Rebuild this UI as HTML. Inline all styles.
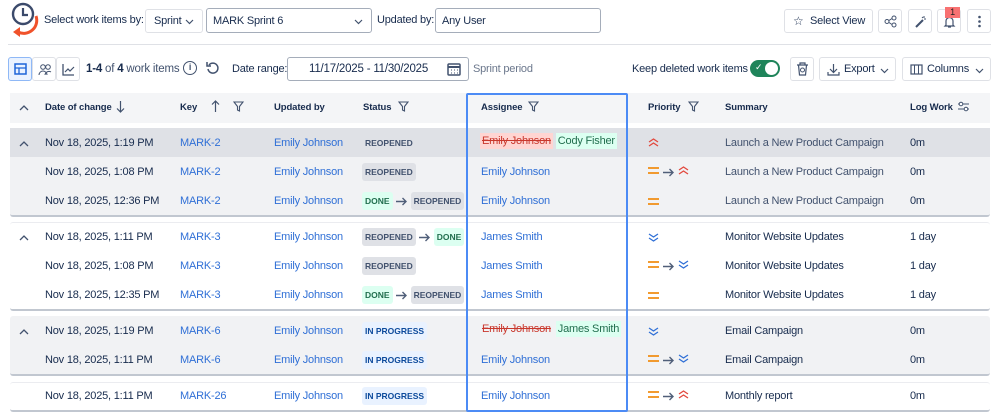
<!DOCTYPE html>
<html><head><meta charset="utf-8"><style>
*{box-sizing:border-box;margin:0;padding:0}
body{width:999px;height:418px;background:#fff;font-family:"Liberation Sans",Arial,sans-serif;color:#172b4d;position:relative;overflow:hidden;font-size:11px;letter-spacing:-0.2px}
.a{position:absolute;white-space:nowrap}
.btn{position:absolute;border:1px solid #dfe1e6;border-radius:3px;background:#fff}
.sel{position:absolute;border:1px solid #a5adba;border-radius:3px;background:#fff}
.grp{position:absolute;left:10px;width:980px;border-bottom:2px solid #c1c7d0;border-radius:3px}
.th{font-weight:bold;font-size:9.5px;color:#172b4d;letter-spacing:-0.1px}
.lk{color:#2f6fd6}
.tag{display:inline-block;font-size:8.5px;font-weight:bold;padding:4px 3px;border-radius:3px;background:#dfe1e6;color:#42526e;vertical-align:middle;letter-spacing:0}
.done{background:#dcfff1;color:#216e4e}
.prog{background:#e9f2ff;color:#0c4a9c}
.arr{vertical-align:middle;margin:0 3px}
svg{display:inline-block}
</style></head><body>
<svg class="a" style="left:8px;top:2px" width="34" height="36" viewBox="0 0 34 36">
<circle cx="15" cy="12" r="10" fill="none" stroke="#3b4a6b" stroke-width="2.4"/>
<path d="M15 6v7h5" fill="none" stroke="#3b4a6b" stroke-width="2.2"/>
<path d="M28 14 A13 13 0 0 1 10 30" fill="none" stroke="#f0522b" stroke-width="3"/>
<path d="M5 30 L12 25 L12 35 Z" fill="#f0522b"/>
</svg>
<div class="a" style="left:44px;top:14px">Select work items by:</div>
<div class="btn" style="left:145px;top:9px;width:58px;height:24px"><span class="a" style="left:8px;top:5px">Sprint</span><svg class="a" style="left:39px;top:9px" width="9" height="6"><path d="M1 1l3.5 3.5L8 1" fill="none" stroke="#42526e" stroke-width="1.2"/></svg></div>
<div class="sel" style="left:206px;top:8px;width:166px;height:25px"><span class="a" style="left:6px;top:6px">MARK Sprint 6</span><svg class="a" style="left:147px;top:10px" width="9" height="6"><path d="M1 1l3.5 3.5L8 1" fill="none" stroke="#42526e" stroke-width="1.2"/></svg></div>
<div class="a" style="left:377px;top:14px">Updated by:</div>
<div class="sel" style="left:435px;top:8px;width:166px;height:25px"><span class="a" style="left:6px;top:6px">Any User</span></div>
<div class="btn" style="left:784px;top:9px;width:89px;height:24px"><span class="a" style="left:8px;top:4px;font-size:12px">☆</span><span class="a" style="left:25px;top:5px">Select View</span></div>
<div class="btn" style="left:878px;top:9px;width:24px;height:24px"><svg class="a" style="left:5px;top:5px" width="13" height="13"><circle cx="10" cy="3" r="2" fill="none" stroke="#42526e"/><circle cx="3" cy="6.5" r="2" fill="none" stroke="#42526e"/><circle cx="10" cy="10" r="2" fill="none" stroke="#42526e"/><path d="M5 5.5l3-2M5 7.5l3 2" stroke="#42526e"/></svg></div>
<div class="btn" style="left:908px;top:9px;width:24px;height:24px"><svg class="a" style="left:5px;top:5px" width="13" height="13"><path d="M2 12L9 5" stroke="#42526e" stroke-width="2"/><path d="M10 1v2M12 4h-2M8 2l1 1" stroke="#42526e"/></svg></div>
<div class="btn" style="left:937px;top:9px;width:24px;height:24px"><svg class="a" style="left:5px;top:6px" width="13" height="13"><path d="M3 9V5a3.5 3.5 0 0 1 7 0v4l1 1H2z M5 11h3" fill="none" stroke="#42526e" stroke-width="1.2"/></svg></div>
<div class="a" style="left:945px;top:7px;width:15px;height:11px;background:#f87171;color:#222;font-size:9px;text-align:center;line-height:11px">1</div>
<div class="btn" style="left:967px;top:9px;width:24px;height:24px"><svg class="a" style="left:10px;top:5px" width="3" height="13"><circle cx="1.5" cy="2" r="1.3" fill="#42526e"/><circle cx="1.5" cy="6.5" r="1.3" fill="#42526e"/><circle cx="1.5" cy="11" r="1.3" fill="#42526e"/></svg></div>
<div class="a" style="left:8px;top:44px;width:983px;height:1px;background:#dfe1e6"></div>

<div class="a" style="left:8px;top:57px;width:24px;height:24px;border:1px solid #8fb8f6;background:#e9f2ff;border-radius:3px"></div>
<svg class="a" style="left:14px;top:63px" width="13" height="12"><rect x="1" y="1" width="11" height="10" fill="none" stroke="#1d64d8" stroke-width="1.5"/><path d="M1 5h11M5 5v6" stroke="#1d64d8" stroke-width="1.3"/></svg>
<div class="btn" style="left:32px;top:57px;width:24px;height:24px"><svg class="a" style="left:5px;top:5px" width="14" height="13"><circle cx="5" cy="4" r="2.3" fill="none" stroke="#42526e"/><circle cx="10" cy="4" r="2.3" fill="none" stroke="#42526e"/><path d="M1 12a4 4 0 0 1 8 0M7 12a4 4 0 0 1 6 -3" fill="none" stroke="#42526e"/></svg></div>
<div class="btn" style="left:56px;top:57px;width:24px;height:24px"><svg class="a" style="left:5px;top:5px" width="13" height="13"><path d="M1 1v11h11" fill="none" stroke="#42526e" stroke-width="1.3"/><path d="M3 9l3-3 2 2 4-4" fill="none" stroke="#42526e" stroke-width="1.2"/></svg></div>
<div class="a" style="left:86px;top:63px;color:#42526e;font-size:11.5px"><b style="color:#172b4d">1-4</b> of <b style="color:#172b4d">4</b> work items</div>
<div class="a" style="left:183px;top:61px;width:14px;height:14px;border:1.5px solid #42526e;border-radius:50%;font-size:9px;text-align:center;line-height:11px;font-weight:bold;color:#42526e">i</div>
<svg class="a" style="left:206px;top:61px" width="14" height="14"><path d="M3 4a5 5 0 1 1 -1 4" fill="none" stroke="#42526e" stroke-width="1.5"/><path d="M1 1v4h4" fill="none" stroke="#42526e" stroke-width="1.5"/></svg>
<div class="a" style="left:232px;top:63px">Date range:</div>
<div class="sel" style="left:287px;top:57px;width:182px;height:24px"><span class="a" style="left:21px;top:5px;font-size:11.5px">11/17/2025 - 11/30/2025</span>
<svg class="a" style="left:159px;top:4px" width="14" height="14"><rect x="1" y="2" width="12" height="11" rx="1" fill="none" stroke="#42526e" stroke-width="1.5"/><path d="M1 5h12" stroke="#42526e" stroke-width="2"/><path d="M4 8h1M7 8h1M10 8h1M4 11h1M7 11h1M10 11h1" stroke="#42526e"/></svg></div>
<div class="a" style="left:473px;top:63px;color:#6b778c">Sprint period</div>
<div class="a" style="left:632px;top:63px">Keep deleted work items</div>
<div class="a" style="left:750px;top:60px;width:30px;height:17px;border-radius:9px;background:#1f845a"><span class="a" style="left:5px;top:2px;color:#fff;font-size:9px">✓</span><span class="a" style="left:15px;top:2px;width:13px;height:13px;border-radius:50%;background:#fff"></span></div>
<div class="btn" style="left:790px;top:57px;width:24px;height:24px"><svg class="a" style="left:5px;top:4px" width="13" height="14"><path d="M1 3h11M4 3V1h5v2M2.5 3l1 10h6l1-10" fill="none" stroke="#42526e" stroke-width="1.2"/><circle cx="6.5" cy="8" r="2" fill="none" stroke="#42526e"/></svg></div>
<div class="btn" style="left:819px;top:57px;width:77px;height:24px"><svg class="a" style="left:7px;top:5px" width="13" height="13"><path d="M6.5 1v8M3 6l3.5 3.5L10 6M1 9v3h11V9" fill="none" stroke="#42526e" stroke-width="1.2"/></svg><span class="a" style="left:24px;top:5px">Export</span><svg class="a" style="left:60px;top:10px" width="9" height="6"><path d="M1 1l3.5 3.5L8 1" fill="none" stroke="#42526e" stroke-width="1.2"/></svg></div>
<div class="btn" style="left:902px;top:57px;width:89px;height:24px"><svg class="a" style="left:7px;top:6px" width="13" height="11"><rect x="1" y="1" width="11" height="9" fill="none" stroke="#42526e" stroke-width="1.2"/><path d="M4.5 1v9M8.5 1v9" stroke="#42526e"/></svg><span class="a" style="left:24px;top:5px">Columns</span><svg class="a" style="left:72px;top:10px" width="9" height="6"><path d="M1 1l3.5 3.5L8 1" fill="none" stroke="#42526e" stroke-width="1.2"/></svg></div>

<div class="a" style="left:10px;top:93px;width:980px;height:30px;background:#f4f5f7"></div>
<svg class="a" style="left:19px;top:104px" width="10" height="7"><path d="M1 6l4-4 4 4" fill="none" stroke="#42526e" stroke-width="1.3"/></svg>
<div class="a th" style="left:45px;top:102px">Date of change</div>
<svg class="a" style="left:116px;top:100px" width="9" height="13"><path d="M4.5 1v11M1 8.5l3.5 3.5L8 8.5" fill="none" stroke="#42526e" stroke-width="1.2"/></svg>
<div class="a th" style="left:180px;top:102px">Key</div>
<svg class="a" style="left:211px;top:100px" width="9" height="13"><path d="M4.5 12V1M1 4.5L4.5 1 8 4.5" fill="none" stroke="#42526e" stroke-width="1.2"/></svg>
<svg class="a filt" style="left:233px;top:101px" width="11" height="11"><path d="M1 1h9L6.5 5.5V10L4.5 9V5.5z" fill="none" stroke="#42526e" stroke-width="1.1"/></svg>
<div class="a th" style="left:274px;top:102px">Updated by</div>
<div class="a th" style="left:363px;top:102px">Status</div>
<svg class="a" style="left:398px;top:101px" width="11" height="11"><path d="M1 1h9L6.5 5.5V10L4.5 9V5.5z" fill="none" stroke="#42526e" stroke-width="1.1"/></svg>
<div class="a th" style="left:481px;top:102px">Assignee</div>
<svg class="a" style="left:528px;top:101px" width="11" height="11"><path d="M1 1h9L6.5 5.5V10L4.5 9V5.5z" fill="none" stroke="#42526e" stroke-width="1.1"/></svg>
<div class="a th" style="left:648px;top:102px">Priority</div>
<svg class="a" style="left:688px;top:101px" width="11" height="11"><path d="M1 1h9L6.5 5.5V10L4.5 9V5.5z" fill="none" stroke="#42526e" stroke-width="1.1"/></svg>
<div class="a th" style="left:725px;top:102px">Summary</div>
<div class="a th" style="left:910px;top:102px">Log Work</div>
<svg class="a" style="left:957px;top:101px" width="13" height="11"><path d="M1 3h11M1 8h11" stroke="#42526e"/><circle cx="4" cy="3" r="1.8" fill="#fff" stroke="#42526e"/><circle cx="9" cy="8" r="1.8" fill="#fff" stroke="#42526e"/></svg>

<div class="grp" style="top:128px;height:89px;background:#f1f2f4"></div>
<div class="a" style="left:10px;top:128px;width:980px;height:29px;background:#dfe1e6"></div>
<div class="grp" style="top:222px;height:89px;background:#fff;border-top:1px solid #ebecf0"></div>
<div class="grp" style="top:316px;height:60px;background:#f1f2f4"></div>
<div class="grp" style="top:382px;height:30px;background:#fff;border-top:1px solid #ebecf0"></div>

<div class="a" style="left:466px;top:93px;width:162px;height:319px;border:2.5px solid #4c8bf5;border-radius:2px"></div>

<svg class="a" style="left:19px;top:140px" width="10" height="7"><path d="M1 6l4-4 4 4" fill="none" stroke="#42526e" stroke-width="1.3"/></svg>
<div class="a" style="left:45px;top:137px">Nov 18, 2025, 1:19 PM</div><div class="a lk" style="left:180px;top:137px">MARK-2</div><div class="a lk" style="left:274px;top:137px">Emily Johnson</div>
<div class="a" style="left:362px;top:134px"><span class="tag">REOPENED</span></div>
<div class="a" style="left:480px;top:135px"><span style="background:#ffd5d2;color:#c9372c;text-decoration:line-through;padding:2px 2px">Emily Johnson</span> <span style="background:#dcfff1;color:#216e4e;padding:2px 2px">Cody Fisher</span></div>
<svg class="a" style="left:648px;top:138px" width="11" height="9"><path d="M1 4l4.5-3L10 4M1 8l4.5-3L10 8" fill="none" stroke="#e2483d" stroke-width="1.3"/></svg>
<div class="a" style="left:725px;top:137px;color:#42526e">Launch a New Product Campaign</div><div class="a" style="left:910px;top:137px">0m</div>

<div class="a" style="left:45px;top:166px">Nov 18, 2025, 1:08 PM</div><div class="a lk" style="left:180px;top:166px">MARK-2</div><div class="a lk" style="left:274px;top:166px">Emily Johnson</div>
<div class="a" style="left:362px;top:163px"><span class="tag">REOPENED</span></div>
<div class="a lk" style="left:481px;top:166px">Emily Johnson</div>
<div class="a" style="left:648px;top:166px"><svg width="12" height="9"><path d="M0 2h11M0 7h11" stroke="#f18d13" stroke-width="1.8"/></svg><svg class="arr" width="12" height="9"><path d="M0 4.5h10M6.5 1l3.5 3.5L6.5 8" fill="none" stroke="#505f79" stroke-width="1.4"/></svg><svg width="11" height="9"><path d="M1 4l4.5-3L10 4M1 8l4.5-3L10 8" fill="none" stroke="#e2483d" stroke-width="1.3"/></svg></div>
<div class="a" style="left:725px;top:166px;color:#42526e">Launch a New Product Campaign</div><div class="a" style="left:910px;top:166px">0m</div>

<div class="a" style="left:45px;top:195px">Nov 18, 2025, 12:36 PM</div><div class="a lk" style="left:180px;top:195px">MARK-2</div><div class="a lk" style="left:274px;top:195px">Emily Johnson</div>
<div class="a" style="left:362px;top:192px"><span class="tag done">DONE</span><svg class="arr" width="12" height="9"><path d="M0 4.5h10M6.5 1l3.5 3.5L6.5 8" fill="none" stroke="#505f79" stroke-width="1.4"/></svg><span class="tag">REOPENED</span></div>
<div class="a lk" style="left:481px;top:195px">Emily Johnson</div>
<svg class="a" style="left:648px;top:197px" width="12" height="9"><path d="M0 2h11M0 7h11" stroke="#f18d13" stroke-width="1.8"/></svg>
<div class="a" style="left:725px;top:195px;color:#42526e">Launch a New Product Campaign</div><div class="a" style="left:910px;top:195px">0m</div>

<svg class="a" style="left:19px;top:234px" width="10" height="7"><path d="M1 6l4-4 4 4" fill="none" stroke="#42526e" stroke-width="1.3"/></svg>
<div class="a" style="left:45px;top:231px">Nov 18, 2025, 1:11 PM</div><div class="a lk" style="left:180px;top:231px">MARK-3</div><div class="a lk" style="left:274px;top:231px">Emily Johnson</div>
<div class="a" style="left:362px;top:228px"><span class="tag">REOPENED</span><svg class="arr" width="12" height="9"><path d="M0 4.5h10M6.5 1l3.5 3.5L6.5 8" fill="none" stroke="#505f79" stroke-width="1.4"/></svg><span class="tag done">DONE</span></div>
<div class="a lk" style="left:481px;top:231px">James Smith</div>
<svg class="a" style="left:648px;top:233px" width="11" height="9"><path d="M1 1l4.5 3L10 1M1 5l4.5 3L10 5" fill="none" stroke="#2f6fd6" stroke-width="1.3"/></svg>
<div class="a" style="left:725px;top:231px">Monitor Website Updates</div><div class="a" style="left:910px;top:231px">1 day</div>

<div class="a" style="left:45px;top:260px">Nov 18, 2025, 1:08 PM</div><div class="a lk" style="left:180px;top:260px">MARK-3</div><div class="a lk" style="left:274px;top:260px">Emily Johnson</div>
<div class="a" style="left:362px;top:257px"><span class="tag">REOPENED</span></div>
<div class="a lk" style="left:481px;top:260px">James Smith</div>
<div class="a" style="left:648px;top:260px"><svg width="12" height="9"><path d="M0 2h11M0 7h11" stroke="#f18d13" stroke-width="1.8"/></svg><svg class="arr" width="12" height="9"><path d="M0 4.5h10M6.5 1l3.5 3.5L6.5 8" fill="none" stroke="#505f79" stroke-width="1.4"/></svg><svg width="11" height="9"><path d="M1 1l4.5 3L10 1M1 5l4.5 3L10 5" fill="none" stroke="#2f6fd6" stroke-width="1.3"/></svg></div>
<div class="a" style="left:725px;top:260px">Monitor Website Updates</div><div class="a" style="left:910px;top:260px">1 day</div>

<div class="a" style="left:45px;top:289px">Nov 18, 2025, 12:35 PM</div><div class="a lk" style="left:180px;top:289px">MARK-3</div><div class="a lk" style="left:274px;top:289px">Emily Johnson</div>
<div class="a" style="left:362px;top:286px"><span class="tag done">DONE</span><svg class="arr" width="12" height="9"><path d="M0 4.5h10M6.5 1l3.5 3.5L6.5 8" fill="none" stroke="#505f79" stroke-width="1.4"/></svg><span class="tag">REOPENED</span></div>
<div class="a lk" style="left:481px;top:289px">James Smith</div>
<svg class="a" style="left:648px;top:291px" width="12" height="9"><path d="M0 2h11M0 7h11" stroke="#f18d13" stroke-width="1.8"/></svg>
<div class="a" style="left:725px;top:289px">Monitor Website Updates</div><div class="a" style="left:910px;top:289px">1 day</div>

<svg class="a" style="left:19px;top:328px" width="10" height="7"><path d="M1 6l4-4 4 4" fill="none" stroke="#42526e" stroke-width="1.3"/></svg>
<div class="a" style="left:45px;top:325px">Nov 18, 2025, 1:19 PM</div><div class="a lk" style="left:180px;top:325px">MARK-6</div><div class="a lk" style="left:274px;top:325px">Emily Johnson</div>
<div class="a" style="left:362px;top:322px"><span class="tag prog">IN PROGRESS</span></div>
<div class="a" style="left:480px;top:323px"><span style="color:#c9372c;text-decoration:line-through;padding:2px 2px">Emily Johnson</span> <span style="background:#dcfff1;color:#216e4e;padding:2px 2px">James Smith</span></div>
<svg class="a" style="left:648px;top:327px" width="11" height="9"><path d="M1 1l4.5 3L10 1M1 5l4.5 3L10 5" fill="none" stroke="#2f6fd6" stroke-width="1.3"/></svg>
<div class="a" style="left:725px;top:325px">Email Campaign</div><div class="a" style="left:910px;top:325px">0m</div>

<div class="a" style="left:45px;top:354px">Nov 18, 2025, 1:11 PM</div><div class="a lk" style="left:180px;top:354px">MARK-6</div><div class="a lk" style="left:274px;top:354px">Emily Johnson</div>
<div class="a" style="left:362px;top:351px"><span class="tag prog">IN PROGRESS</span></div>
<div class="a lk" style="left:481px;top:354px">Emily Johnson</div>
<div class="a" style="left:648px;top:354px"><svg width="12" height="9"><path d="M0 2h11M0 7h11" stroke="#f18d13" stroke-width="1.8"/></svg><svg class="arr" width="12" height="9"><path d="M0 4.5h10M6.5 1l3.5 3.5L6.5 8" fill="none" stroke="#505f79" stroke-width="1.4"/></svg><svg width="11" height="9"><path d="M1 1l4.5 3L10 1M1 5l4.5 3L10 5" fill="none" stroke="#2f6fd6" stroke-width="1.3"/></svg></div>
<div class="a" style="left:725px;top:354px">Email Campaign</div><div class="a" style="left:910px;top:354px">0m</div>

<div class="a" style="left:45px;top:390px">Nov 18, 2025, 1:11 PM</div><div class="a lk" style="left:180px;top:390px">MARK-26</div><div class="a lk" style="left:274px;top:390px">Emily Johnson</div>
<div class="a" style="left:362px;top:387px"><span class="tag prog">IN PROGRESS</span></div>
<div class="a lk" style="left:481px;top:390px">Emily Johnson</div>
<div class="a" style="left:648px;top:390px"><svg width="12" height="9"><path d="M0 2h11M0 7h11" stroke="#f18d13" stroke-width="1.8"/></svg><svg class="arr" width="12" height="9"><path d="M0 4.5h10M6.5 1l3.5 3.5L6.5 8" fill="none" stroke="#505f79" stroke-width="1.4"/></svg><svg width="11" height="9"><path d="M1 4l4.5-3L10 4M1 8l4.5-3L10 8" fill="none" stroke="#e2483d" stroke-width="1.3"/></svg></div>
<div class="a" style="left:725px;top:390px">Monthly report</div><div class="a" style="left:910px;top:390px">0m</div>
</body></html>
